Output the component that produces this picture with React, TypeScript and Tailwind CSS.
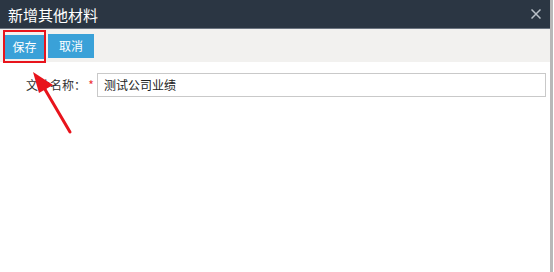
import React from "react";

const font = { fontFamily: '"Microsoft YaHei", "Noto Sans CJK SC", "Liberation Sans", sans-serif' };

export default function App() {
  return (
    <div className="relative w-[554px] h-[272px] overflow-hidden bg-white" style={font}>
      <div className="flex h-full flex-col border-r-[3px] border-[#b8b8b8] mr-px">
        <div className="flex h-[29px] items-center justify-between bg-[#2b3643] pl-[8px] pr-[9px] border-b border-[#6b7480]">
          <span className="text-[15px] text-white leading-none">新增其他材料</span>
          <svg width="10" height="10" viewBox="0 0 10 10">
            <path d="M0.5 0.5L9.5 9.5M9.5 0.5L0.5 9.5" stroke="#b9c0c8" strokeWidth="1.5" />
          </svg>
        </div>
        <div className="flex h-[33px] items-center gap-[4px] bg-[#f2f1ef] pl-[5px]">
          <div className="relative">
            <button className="h-[24px] w-[39px] bg-[#3aa1d8] text-[12px] text-white">保存</button>
            <div className="absolute -left-[2px] -top-[3px] h-[33px] w-[43px] border-[2px] border-[#e8141c]" />
          </div>
          <button className="h-[24px] w-[46px] bg-[#3aa1d8] text-[12px] text-white">取消</button>
        </div>
        <div className="flex-1 bg-white pt-[11px]">
          <div className="flex items-center">
            <span className="w-[86px] text-right text-[12px] text-[#333]">文件名称：</span>
            <span className="w-[10px] text-center text-[12px] text-[#e33]">*</span>
            <div className="ml-[1px] flex h-[24px] w-[449px] items-center border border-[#c9c9c9] px-[6px] text-[12px] text-[#222]">
              测试公司业绩
            </div>
          </div>
        </div>
      </div>
      <svg className="absolute left-0 top-0" width="554" height="272" viewBox="0 0 554 272">
        <line x1="70" y1="132" x2="43" y2="86" stroke="#e8141c" strokeWidth="3" strokeLinecap="round" />
        <polygon points="33,72 39,93 53,85" fill="#e8141c" />
      </svg>
    </div>
  );
}
